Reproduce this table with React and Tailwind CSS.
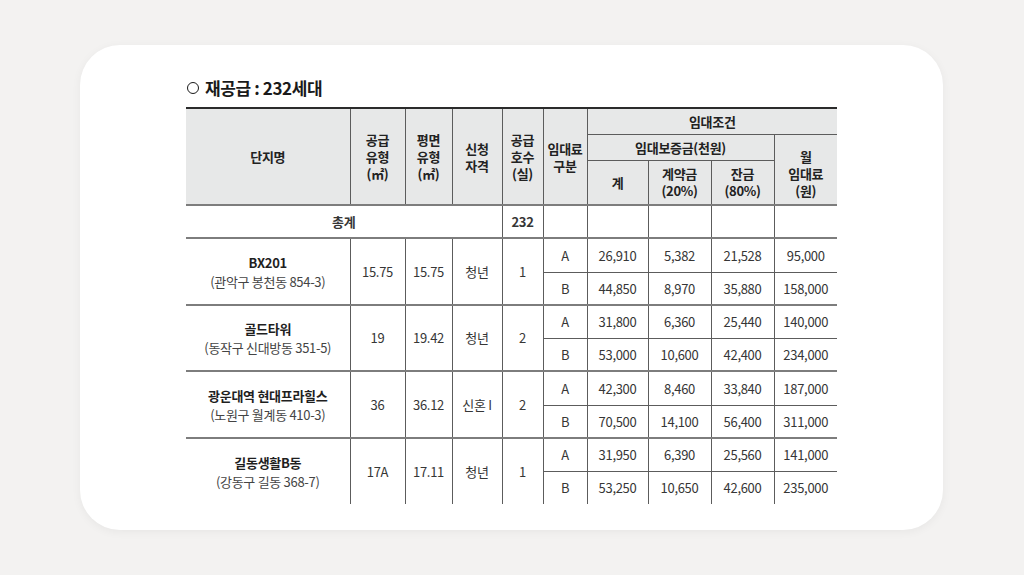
import React from 'react'

const groups = [
  {
    name: 'BX201',
    addr: '(관악구 봉천동 854-3)',
    supply: '15.75',
    plan: '15.75',
    qual: '청년',
    count: '1',
    rows: [
      ['A', '26,910', '5,382', '21,528', '95,000'],
      ['B', '44,850', '8,970', '35,880', '158,000'],
    ],
  },
  {
    name: '골드타워',
    addr: '(동작구 신대방동 351-5)',
    supply: '19',
    plan: '19.42',
    qual: '청년',
    count: '2',
    rows: [
      ['A', '31,800', '6,360', '25,440', '140,000'],
      ['B', '53,000', '10,600', '42,400', '234,000'],
    ],
  },
  {
    name: '광운대역 현대프라힐스',
    addr: '(노원구 월계동 410-3)',
    supply: '36',
    plan: '36.12',
    qual: '신혼 I',
    count: '2',
    rows: [
      ['A', '42,300', '8,460', '33,840', '187,000'],
      ['B', '70,500', '14,100', '56,400', '311,000'],
    ],
  },
  {
    name: '길동생활B동',
    addr: '(강동구 길동 368-7)',
    supply: '17A',
    plan: '17.11',
    qual: '청년',
    count: '1',
    rows: [
      ['A', '31,950', '6,390', '25,560', '141,000'],
      ['B', '53,250', '10,650', '42,600', '235,000'],
    ],
  },
]

const th = 'border border-[#5c5c5c] font-bold text-[#222] leading-[17px] p-0 align-middle text-center'
const td = 'border border-[#5c5c5c] text-[#363636] p-0 align-middle text-center'
const thick = 'border-b-2 border-b-[#7d7d7d]'

export default function App() {
  return (
    <div
      className="min-h-[575px] w-[1024px] bg-[#f3f2f1] pt-[45px] pl-[80px]"
      style={{ fontFamily: '"Noto Sans CJK KR", "Noto Sans", sans-serif' }}
    >
      <div className="w-[863px] h-[485px] rounded-[40px] bg-white shadow-[0_2px_10px_rgba(0,0,0,0.05)] pl-[106px] pt-[31px] overflow-hidden">
        {/* Title */}
        <h1 className="flex items-center text-[17px] font-bold text-[#1a1a1a] leading-[24px] tracking-[-0.4px]">
          <span className="inline-block w-[12px] h-[12px] rounded-full border-[1.5px] border-[#1a1a1a] mr-[6px] ml-[1px]" />
          재공급 : 232세대
        </h1>

        <div className="mt-[7px] w-[651px] border-t-2 border-[#2b2b2b]">
          <table className="w-[651px] table-fixed border-collapse border-hidden text-[13px] tracking-[-0.3px]">
            <colgroup>
              <col className="w-[164px]" />
              <col className="w-[55px]" />
              <col className="w-[47px]" />
              <col className="w-[50px]" />
              <col className="w-[41px]" />
              <col className="w-[44px]" />
              <col className="w-[61px]" />
              <col className="w-[63px]" />
              <col className="w-[63px]" />
              <col className="w-[63px]" />
            </colgroup>
            <thead className="bg-[#e7e8e8]">
              <tr className="h-[25px]">
                <th rowSpan={3} className={`${th} ${thick}`}>단지명</th>
                <th rowSpan={3} className={`${th} ${thick}`}>
                  공급<br />유형<br />(㎡)
                </th>
                <th rowSpan={3} className={`${th} ${thick}`}>
                  평면<br />유형<br />(㎡)
                </th>
                <th rowSpan={3} className={`${th} ${thick}`}>
                  신청<br />자격
                </th>
                <th rowSpan={3} className={`${th} ${thick}`}>
                  공급<br />호수<br />(실)
                </th>
                <th rowSpan={3} className={`${th} ${thick}`}>
                  임대료<br />구분
                </th>
                <th colSpan={4} className={th}>임대조건</th>
              </tr>
              <tr className="h-[26px]">
                <th colSpan={3} className={th}>임대보증금(천원)</th>
                <th rowSpan={2} className={`${th} ${thick} pt-[8px]`}>
                  월<br />임대료<br />(원)
                </th>
              </tr>
              <tr className="h-[45px]">
                <th className={`${th} ${thick}`}>계</th>
                <th className={`${th} ${thick}`}>
                  계약금<br />(20%)
                </th>
                <th className={`${th} ${thick}`}>
                  잔금<br />(80%)
                </th>
              </tr>
            </thead>
            <tbody>
              <tr className="h-[33px]">
                <td colSpan={4} className={`${td} font-bold text-[#222] ${thick}`}>총계</td>
                <td className={`${td} font-bold text-[#222] ${thick}`}>232</td>
                <td className={`${td} ${thick}`}></td>
                <td className={`${td} ${thick}`}></td>
                <td className={`${td} ${thick}`}></td>
                <td className={`${td} ${thick}`}></td>
                <td className={`${td} ${thick}`}></td>
              </tr>
              {groups.map((g, gi) =>
                g.rows.map((r, ri) => {
                  const last = ri === 1
                  return (
                    <tr key={`${gi}-${ri}`} className={last || gi % 2 === 1 ? 'h-[33px]' : 'h-[34px]'}>
                      {ri === 0 && (
                        <>
                          <td rowSpan={2} className={`${td} ${thick} leading-[19px]`}>
                            <div className="font-bold text-[#1f1f1f]">{g.name}</div>
                            <div className="text-[#444]">{g.addr}</div>
                          </td>
                          <td rowSpan={2} className={`${td} ${thick}`}>{g.supply}</td>
                          <td rowSpan={2} className={`${td} ${thick}`}>{g.plan}</td>
                          <td rowSpan={2} className={`${td} ${thick}`}>{g.qual}</td>
                          <td rowSpan={2} className={`${td} ${thick}`}>{g.count}</td>
                        </>
                      )}
                      {r.map((c, ci) => (
                        <td key={ci} className={`${td} ${last ? thick : ''}`}>{c}</td>
                      ))}
                    </tr>
                  )
                })
              )}
            </tbody>
          </table>
        </div>
      </div>
    </div>
  )
}
